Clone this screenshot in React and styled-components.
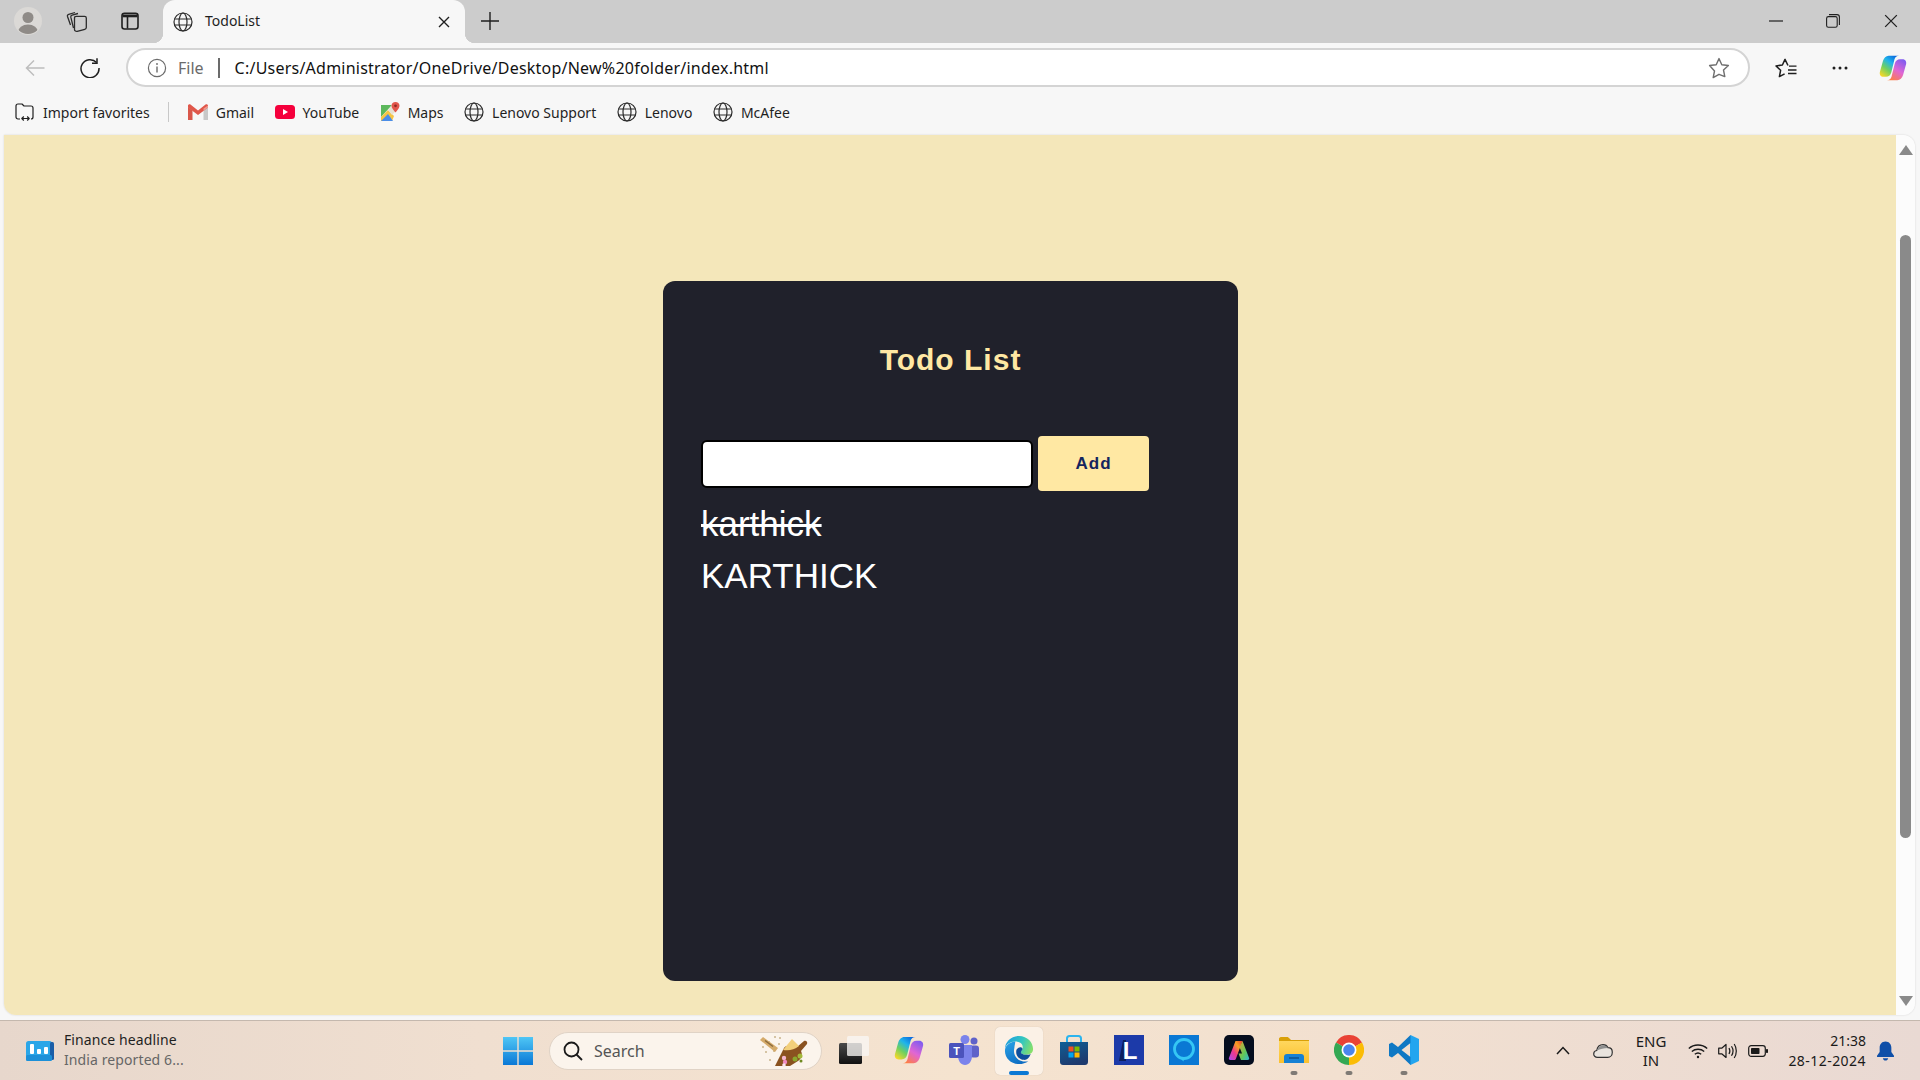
import React from "react";
import styled, { createGlobalStyle } from "styled-components";

const GlobalStyle = createGlobalStyle`
  * {
    box-sizing: border-box;
  }
  html,
  body {
    margin: 0;
    padding: 0;
    height: 100%;
    overflow: hidden;
  }
`;

const uiFont = `"Noto Sans", "Open Sans", sans-serif`;
const pageFont = `"Liberation Sans", Arial, sans-serif`;

/* ---------- icons ---------- */

const GlobeIcon = ({ size = 20 }) => (
  <svg width={size} height={size} viewBox="0 0 20 20" fill="none" stroke="#2b2b2b" strokeWidth="1.2">
    <circle cx="10" cy="10" r="9" />
    <ellipse cx="10" cy="10" rx="4" ry="9" />
    <path d="M1.6 7h16.8M1.6 13h16.8" />
  </svg>
);

const ProfileIcon = () => (
  <svg width="28" height="28" viewBox="0 0 28 28">
    <circle cx="14" cy="14" r="14" fill="#dbd9d6" />
    <clipPath id="profile-clip">
      <circle cx="14" cy="14" r="13" />
    </clipPath>
    <g clipPath="url(#profile-clip)" fill="#8f8b87">
      <circle cx="14" cy="10.5" r="5.5" />
      <ellipse cx="14" cy="25" rx="10" ry="7.5" />
    </g>
  </svg>
);

const WorkspacesIcon = () => (
  <svg width="22" height="24" viewBox="0 0 22 24" fill="none" stroke="#2b2b2b" strokeWidth="1.3" strokeLinejoin="round">
    <path d="M4.5 16 1.500 7.500c-.3-1 .2-1.800 1.200-2.100L9 3.500" />
    <path d="M7.500 19 4.800 8.200c-.2-1 .3-1.800 1.300-2.100L12 4.500" />
    <path d="M8.500 9c0-1 .6-1.700 1.600-1.700h8.500c1 0 1.700.7 1.700 1.700v9.500c0 1-.6 1.600-1.500 1.800l-7.600 2c-1.300.3-2.700-.4-2.700-1.700z" />
  </svg>
);

const TabActionsIcon = () => (
  <svg width="20" height="20" viewBox="0 0 20 20" fill="none" stroke="#1f1f1f" strokeWidth="1.6">
    <rect x="2" y="2.2" width="16" height="15.8" rx="2.5" />
    <path d="M2.5 3.500h15v2.800h-15z" fill="#1f1f1f" stroke="none" />
    <path d="M7.500 5v12.500" />
  </svg>
);

const CloseIcon = ({ size = 12, width = 1.4, color = "#1f1f1f" }) => (
  <svg width={size} height={size} viewBox="0 0 12 12" fill="none" stroke={color} strokeWidth={width}>
    <path d="M1 1l10 10M11 1 1 11" />
  </svg>
);

const PlusIcon = () => (
  <svg width="18" height="18" viewBox="0 0 18 18" fill="none" stroke="#1f1f1f" strokeWidth="1.4">
    <path d="M9 0v18M0 9h18" />
  </svg>
);

const MinimizeIcon = () => (
  <svg width="14" height="14" viewBox="0 0 14 14" fill="none" stroke="#1f1f1f" strokeWidth="1.2">
    <path d="M0 7h14" />
  </svg>
);

const RestoreIcon = () => (
  <svg width="14" height="14" viewBox="0 0 14 14" fill="none" stroke="#1f1f1f" strokeWidth="1.1">
    <rect x="0.6" y="2.6" width="10.6" height="10.6" rx="1.8" />
    <path d="M3 .6h8c1.300 0 2.400 1 2.400 2.400v8" />
  </svg>
);

const BackIcon = () => (
  <svg width="20" height="18" viewBox="0 0 20 18" fill="none" stroke="#bdbdbd" strokeWidth="1.5">
    <path d="M19.500 9H1.500M9 1.500 1.500 9 9 16.500" />
  </svg>
);

const RefreshIcon = () => (
  <svg width="20" height="20" viewBox="0 0 20 20" fill="none" stroke="#1f1f1f" strokeWidth="1.5">
    <path d="M16.600 4.500A9 9 0 1 0 19 10" />
    <path d="M17 .2v5h-5" />
  </svg>
);

const InfoIcon = () => (
  <svg width="20" height="20" viewBox="0 0 20 20" fill="none" stroke="#6b6b6b" strokeWidth="1.2">
    <circle cx="10" cy="10" r="8.600" />
    <path d="M10 8.600v6" strokeWidth="1.400" />
    <circle cx="10" cy="6" r="0.9" fill="#6b6b6b" stroke="none" />
  </svg>
);

const StarIcon = () => (
  <svg width="22" height="22" viewBox="0 0 22 22" fill="none" stroke="#6f6f6f" strokeWidth="1.4" strokeLinejoin="round">
    <path d="M11 1.600l2.800 6.100 6.600.8-4.900 4.500 1.300 6.600L11 17.300l-5.800 3.300 1.300-6.600L1.600 8.500l6.600-.8z" />
  </svg>
);

const FavoritesIcon = () => (
  <svg width="22" height="20" viewBox="0 0 22 20" fill="none" stroke="#1f1f1f" strokeWidth="1.5" strokeLinejoin="round">
    <path d="M13 7.500 10 1.400 7.400 7 1 7.900l4.600 4.400-1.200 6.300 5.200-2.800" />
    <path d="M14 8.200h7.500M13 12h8.500M13 15.500h8.500" strokeWidth="1.3" />
  </svg>
);

const DotsIcon = () => (
  <svg width="16" height="4" viewBox="0 0 16 4" fill="#1f1f1f">
    <circle cx="2" cy="2" r="1.500" />
    <circle cx="8" cy="2" r="1.500" />
    <circle cx="14" cy="2" r="1.500" />
  </svg>
);

const CopilotIcon = ({ id, size = 28 }) => (
  <svg width={size} height={size} viewBox="0 0 32 32">
    <defs>
      <linearGradient id={`${id}-a`} x1="0.85" y1="0" x2="0.15" y2="1">
        <stop offset="0" stopColor="#0a62dc" />
        <stop offset="0.35" stopColor="#1fb4ec" />
        <stop offset="0.65" stopColor="#6fd060" />
        <stop offset="1" stopColor="#f8d828" />
      </linearGradient>
      <linearGradient id={`${id}-b`} x1="0.8" y1="0" x2="0.2" y2="1">
        <stop offset="0" stopColor="#7f5cf0" />
        <stop offset="0.5" stopColor="#e066d4" />
        <stop offset="1" stopColor="#ff7f3f" />
      </linearGradient>
    </defs>
    <path d="M11 2h12c-3 0-4.500 1.500-5.300 4L14 21c-.8 3-3 5-6 5H5C2 26 .3 23.500 1 20.500L4.500 8C5.500 4.500 8 2 11 2z" fill={`url(#${id}-a)`} />
    <path d="M21 30H9c3 0 4.500-1.500 5.300-4L18 11c.8-3 3-5 6-5h3c3 0 4.700 2.500 4 5.500L27.500 24c-1 3.500-3.500 6-6.500 6z" fill={`url(#${id}-b)`} />
  </svg>
);

const ImportIcon = () => (
  <svg width="20" height="20" viewBox="0 0 20 20" fill="none" stroke="#1f1f1f" strokeWidth="1.2" strokeLinejoin="round">
    <path d="M5 17H3c-1.200 0-2-.8-2-2V4c0-1.200.8-2 2-2h4l2 2h7c1.200 0 2 .8 2 2v9c0 1.200-.8 2-2 2" />
    <path d="M7 16.500h7M8.800 14.500l-2 2 2 2M12.200 14.500l2 2-2 2" />
  </svg>
);

const GmailIcon = () => (
  <svg width="20" height="16" viewBox="0 0 20 16">
    <path d="M0 3v13h4.500V6.500z" fill="#d9574a" />
    <path d="M20 3v13h-4.500V6.500z" fill="#c8c8c8" />
    <path d="M0 1.500C0 .500 1.500-.300 2.500.500L10 6.500 17.500.500c1-.8 2.500 0 2.500 1V3.500L10 11 0 3.500z" fill="#e0574a" />
    <path d="M15.500 4.400 20 1.500v2L15.500 6.800z" fill="#ef9a90" />
  </svg>
);

const YouTubeIcon = () => (
  <svg width="20" height="14" viewBox="0 0 20 14">
    <rect width="20" height="14" rx="3.500" fill="#f5003c" />
    <path d="M8 4l5 3-5 3z" fill="#fff" />
  </svg>
);

const MapsIcon = () => (
  <svg width="20" height="20" viewBox="0 0 20 20">
    <path d="M1 3h11L1 15z" fill="#5cb85c" />
    <path d="M1 15 8 8l6 6-2 5H1z" fill="#f6c544" />
    <path d="M1 19 8 12l5 7z" fill="#4a8de8" />
    <path d="M12 3h3v7l-3 3-4-5z" fill="#e7e3d4" />
    <path d="M15.500 0c-2.300 0-4 1.700-4 3.800 0 2.700 4 6.700 4 6.700s4-4 4-6.700c0-2.100-1.700-3.800-4-3.800z" fill="#e2574c" />
    <circle cx="15.500" cy="3.800" r="1.400" fill="#8f2a24" />
  </svg>
);

const WidgetIcon = () => (
  <svg width="28" height="20" viewBox="0 0 28 20">
    <rect width="26" height="20" rx="2.500" fill="#2aa6e8" />
    <rect x="24" y="1" width="4" height="18" rx="1.500" fill="#1a5ea8" />
    <rect y="14" width="26" height="6" rx="1.500" fill="#1c90d8" />
    <rect x="4" y="3" width="4" height="10" rx="1" fill="#fff" />
    <rect x="11" y="8" width="4" height="5" rx="1" fill="#fff" />
    <rect x="18" y="6" width="4" height="7" rx="1" fill="#fff" />
  </svg>
);

const WindowsIcon = () => (
  <svg width="30" height="30" viewBox="0 0 30 30">
    <defs>
      <linearGradient id="win-a" x1="0" y1="0" x2="0" y2="1">
        <stop offset="0" stopColor="#4fc6f5" />
        <stop offset="1" stopColor="#0a78d6" />
      </linearGradient>
    </defs>
    <path d="M0 1h14.300v13.300H0zM15.700 1H30v13.300H15.700zM0 15.700h14.300V29H0zM15.700 15.700H30V29H15.700z" fill="url(#win-a)" />
  </svg>
);

const SearchGlassIcon = () => (
  <svg width="20" height="20" viewBox="0 0 20 20" fill="none" stroke="#1a1a1a" strokeWidth="1.800">
    <circle cx="8.500" cy="8.500" r="7" />
    <path d="M13.500 13.500 19 19" />
  </svg>
);

const SearchArtIcon = () => (
  <svg width="60" height="32" viewBox="0 0 60 32">
    <g fill="#c9b58c">
      <circle cx="10" cy="7" r="1" />
      <circle cx="16" cy="2" r="1" />
      <circle cx="21" cy="3" r="1" />
      <circle cx="20" cy="9" r="1" />
      <circle cx="4" cy="12" r="1" />
      <circle cx="7" cy="17" r="1" />
      <circle cx="15" cy="16" r="1" />
      <circle cx="11" cy="25" r="1" />
    </g>
    <path d="M1 5l3-3 15 11-3 4z" fill="#d4aa6a" />
    <path d="M6 5.500l8 6" stroke="#8a6a3c" strokeWidth="1.500" />
    <path d="M16 31l9-18c2-3 9-3 13-1l7-6c2-1 4 1 3 3l-6 7c2 4 0 8-3 10l-8 5z" fill="#8a5220" />
    <path d="M24 15 33 4l7 7c-5 4-10 5-16 4z" fill="#f2cf7a" />
    <circle cx="25" cy="23" r="2.200" fill="#f4b6d2" />
    <circle cx="26" cy="27" r="2.200" fill="#f08ac0" />
    <circle cx="25" cy="30" r="1.800" fill="#fbe4ef" />
    <circle cx="36" cy="24" r="2.500" fill="#8aa82e" />
    <circle cx="41" cy="21" r="2.500" fill="#a3b83a" />
    <circle cx="42" cy="26" r="1.500" fill="#6f8a22" />
  </svg>
);

const TaskViewIcon = () => (
  <svg width="30" height="28" viewBox="0 0 30 28">
    <defs>
      <linearGradient id="tv-a" x1="0" y1="0" x2="0" y2="1">
        <stop offset="0" stopColor="#4a4a4a" />
        <stop offset="1" stopColor="#111" />
      </linearGradient>
    </defs>
    <rect x="0" y="7" width="23" height="21" rx="1.500" fill="url(#tv-a)" />
    <rect x="8" y="0" width="22" height="20" rx="1.500" fill="#f8f6f3" fillOpacity="0.78" />
  </svg>
);

const TeamsIcon = () => (
  <svg width="30" height="30" viewBox="0 0 30 30">
    <circle cx="25" cy="6" r="3.500" fill="#5f62c9" />
    <rect x="21" y="10.500" width="9" height="12" rx="3" fill="#5f62c9" />
    <circle cx="16" cy="4.500" r="4.500" fill="#7b83eb" />
    <path d="M9 10h14v11c0 5-3 9-7 9s-7-4-7-9z" fill="#7b83eb" />
    <rect x="0" y="8" width="15" height="15" rx="1.500" fill="#4b53bc" />
    <text x="7.500" y="19.500" textAnchor="middle" fontFamily={pageFont} fontSize="11" fontWeight="700" fill="#fff">T</text>
  </svg>
);

const EdgeIcon = () => (
  <svg width="30" height="30" viewBox="0 0 32 32">
    <defs>
      <linearGradient id="edge-a" x1="0" y1="0.3" x2="1" y2="0.6">
        <stop offset="0" stopColor="#1f9ee0" />
        <stop offset="0.55" stopColor="#33c6c0" />
        <stop offset="1" stopColor="#86e06a" />
      </linearGradient>
      <linearGradient id="edge-b" x1="0" y1="0" x2="0.5" y2="1">
        <stop offset="0" stopColor="#2aa3e6" />
        <stop offset="1" stopColor="#0f6fc4" />
      </linearGradient>
    </defs>
    <path d="M1 15C1 7 8 1 16 1c9 0 15 7 15 14 0 4-3 6-7 6-3 0-6-1-6-3 0-1 2-2 2-5 0-4-4-6-8-6C7 7 2 10 1 15z" fill="url(#edge-a)" />
    <path d="M12 7C6 7.500 1 11.500 1 17c0 8 7 14 15 14 4 0 7-1 10-3-4 1-9 0-12-3-3-3-4-7-3-11 .3-3 1-5 1-7z" fill="url(#edge-b)" />
    <path d="M18 18c0 2 3 3 6 3 1 0 3 0 4.500-.8C26.500 25 24 27 21 26.500c-4.500-.5-8-4-8-8.500 0-3 2-5.500 5-5 2 .3 2.300 2.300 1 3.500-.7.700-1 1.200-1 2z" fill="#0f4f9c" />
  </svg>
);

const StoreIcon = () => (
  <svg width="30" height="30" viewBox="0 0 30 30">
    <defs>
      <linearGradient id="store-a" x1="0" y1="0" x2="0.4" y2="1">
        <stop offset="0" stopColor="#0f5f96" />
        <stop offset="1" stopColor="#1e3a6e" />
      </linearGradient>
    </defs>
    <path d="M8 7V3.500C8 2 9 1 10.500 1h9C21 1 22 2 22 3.500V7" fill="none" stroke="#2cb4ee" strokeWidth="2" />
    <path d="M1 7h28v20c0 1.700-1.300 3-3 3H4c-1.700 0-3-1.300-3-3z" fill="url(#store-a)" />
    <rect x="9.500" y="11.500" width="5" height="5" fill="#f25022" />
    <rect x="15.500" y="11.500" width="5" height="5" fill="#7fba00" />
    <rect x="9.500" y="17.500" width="5" height="5" fill="#00a4ef" />
    <rect x="15.500" y="17.500" width="5" height="5" fill="#ffb900" />
  </svg>
);

const LenovoIcon = () => (
  <svg width="30" height="30" viewBox="0 0 30 30">
    <rect width="30" height="30" fill="#1c3aa9" />
    <path d="M9 5h3v21H5z" fill="#0c1f5e" />
    <text x="16" y="24" textAnchor="middle" fontFamily={pageFont} fontSize="24" fontWeight="700" fill="#fff">L</text>
  </svg>
);

const AlexaIcon = () => (
  <svg width="30" height="30" viewBox="0 0 30 30">
    <rect width="30" height="30" fill="#0a78d4" />
    <circle cx="15" cy="14" r="9.500" fill="none" stroke="#35c6f4" strokeWidth="2.800" />
    <path d="M11 23l3.500 3.500.5-3z" fill="#35c6f4" />
  </svg>
);

const AdobeIcon = () => (
  <svg width="30" height="30" viewBox="0 0 30 30">
    <defs>
      <linearGradient id="adobe-a" x1="0" y1="1" x2="1" y2="0">
        <stop offset="0" stopColor="#a64cf5" />
        <stop offset="0.4" stopColor="#f0388a" />
        <stop offset="0.7" stopColor="#f8a020" />
        <stop offset="1" stopColor="#e83a3a" />
      </linearGradient>
      <linearGradient id="adobe-b" x1="0" y1="0" x2="1" y2="1">
        <stop offset="0" stopColor="#f0a030" />
        <stop offset="0.6" stopColor="#5fc95a" />
        <stop offset="1" stopColor="#2fb4d8" />
      </linearGradient>
    </defs>
    <rect width="30" height="30" rx="5" fill="#050d1e" />
    <path d="M11.500 6h7l-3 8-3.500 9.500c-.3 1-1 1.500-2 1.500H6.500C5 25 4.500 24 5 22.800z" fill="url(#adobe-a)" />
    <path d="M18.500 6 25 22.800c.5 1.200 0 2.200-1.500 2.200H17l-2.500-6.500h3.500L15.500 12z" fill="url(#adobe-b)" />
  </svg>
);

const FolderIcon = () => (
  <svg width="30" height="30" viewBox="0 0 30 30">
    <defs>
      <linearGradient id="folder-a" x1="0" y1="0" x2="0" y2="1">
        <stop offset="0" stopColor="#ffd75e" />
        <stop offset="1" stopColor="#fbc02d" />
      </linearGradient>
    </defs>
    <path d="M0 4c0-1 .7-2 2-2h6c1 0 1.500.5 2 1l2 2h18v3H0z" fill="#d9a008" />
    <path d="M0 6h30v22H0z" fill="url(#folder-a)" />
    <path d="M5 28v-6c0-2 1-3 3-3h14c2 0 3 1 3 3v6z" fill="#1681d4" />
    <path d="M10 23h10" stroke="#0b4f8c" strokeWidth="1.400" />
  </svg>
);

const ChromeIcon = () => (
  <svg width="30" height="30" viewBox="0 0 30 30">
    <path d="M15 15 2 7.500A15 15 0 0 1 28 7.500z" fill="#e94235" />
    <path d="M15 15 28 7.500A15 15 0 0 1 15 30z" fill="#fbbc05" />
    <path d="M15 15 15 30A15 15 0 0 1 2 7.500z" fill="#34a853" />
    <circle cx="15" cy="15" r="7.500" fill="#fff" />
    <circle cx="15" cy="15" r="5.800" fill="#4a85ed" />
  </svg>
);

const VsCodeIcon = () => (
  <svg width="30" height="30" viewBox="0 0 30 30">
    <path d="M21.500 0 30 4v22l-8.500 4-.5-.5V.5z" fill="#23a5ef" />
    <path d="M21.500 0 9 12 3 7.500 0 9v12l3 1.500L9 18l12.500 12V22l-9-7 9-7z" fill="#0f78c4" />
  </svg>
);

const ChevronUpIcon = () => (
  <svg width="14" height="9" viewBox="0 0 14 9" fill="none" stroke="#1a1a1a" strokeWidth="1.500">
    <path d="M1 8l6-6.500L13 8" />
  </svg>
);

const CloudIcon = () => (
  <svg width="20" height="14" viewBox="0 0 20 14">
    <path d="M4.500 13.300C2 13.300.7 11.600.7 9.900c0-1.900 1.400-3.200 3-3.400C4.400 3 7 .7 10 .7c2.300 0 4.200 1.300 5 3 2.500 0 4.300 1.800 4.300 4.500 0 3-2 5.100-4.600 5.100z" fill="#e9e4de" stroke="#333" strokeWidth="1.200" />
    <path d="M4 6.500C5 3.500 7.500 1.200 10 1.200c2.200 0 4 1.200 4.800 2.800C11 4 7 5 4 6.500z" fill="#8f8f8f" />
  </svg>
);

const WifiIcon = () => (
  <svg width="20" height="16" viewBox="0 0 20 16" fill="none" stroke="#1a1a1a" strokeWidth="1.300">
    <path d="M.8 5.500C5.800.8 14.200.8 19.200 5.500M3.800 8.500c3.500-3 9-3 12.400 0M6.800 11.300c1.800-1.500 4.600-1.500 6.400 0" />
    <circle cx="10" cy="14" r="1.200" fill="#1a1a1a" stroke="none" />
  </svg>
);

const VolumeIcon = () => (
  <svg width="20" height="16" viewBox="0 0 20 16" fill="none" stroke="#1a1a1a" strokeWidth="1.200" strokeLinejoin="round">
    <path d="M.7 5.200h3L8 1.500v13L3.700 10.800h-3z" />
    <path d="M11 5c1 1.700 1 4.300 0 6M13.500 3.200c1.800 2.800 1.800 6.800 0 9.600M16.200 1c2.800 4 2.800 10 0 14" />
  </svg>
);

const BatteryIcon = () => (
  <svg width="20" height="12" viewBox="0 0 20 12" fill="none">
    <rect x="0.700" y="0.700" width="16.600" height="10.600" rx="2.500" stroke="#1a1a1a" strokeWidth="1.200" />
    <rect x="3" y="3" width="8.500" height="6" rx="0.800" fill="#1a1a1a" />
    <rect x="18" y="4" width="2" height="4" rx="0.800" fill="#1a1a1a" />
  </svg>
);

const BellIcon = () => (
  <svg width="17" height="20" viewBox="0 0 16 18" fill="#0f4fa8">
    <path d="M8 0C4.500 0 2.500 2.800 2.500 6v4L0 13.500c-.3.600 0 1.200.7 1.200h14.600c.7 0 1-.6.7-1.200L13.500 10V6C13.500 2.800 11.500 0 8 0z" />
    <path d="M5.500 15.800h5c-.3 1.300-1.300 2.200-2.500 2.200s-2.200-.9-2.500-2.200z" />
  </svg>
);

/* ---------- browser chrome ---------- */

const Desktop = styled.div`
  width: 1920px;
  height: 1080px;
  display: flex;
  flex-direction: column;
  background: #f7f7f7;
  font-family: ${uiFont};
  overflow: hidden;
`;

const TabStrip = styled.div`
  height: 43px;
  flex: none;
  display: flex;
  align-items: center;
  background: #cccccc;
`;

const StripButton = styled.div`
  width: ${(p) => p.$w}px;
  height: 43px;
  flex: none;
  display: flex;
  align-items: center;
  justify-content: center;
  padding-bottom: 2px;
`;

const Tab = styled.div`
  position: relative;
  width: 302px;
  height: 43px;
  flex: none;
  margin-left: 2px;
  display: flex;
  align-items: center;
  padding: 0 15px 0 10px;
  background: #f7f7f7;
  border-radius: 12px 12px 0 0;
  &::before,
  &::after {
    content: "";
    position: absolute;
    bottom: 0;
    width: 10px;
    height: 10px;
  }
  &::before {
    left: -10px;
    background: radial-gradient(circle at 0 0, #cccccc 10px, #f7f7f7 10.5px);
  }
  &::after {
    right: -10px;
    background: radial-gradient(circle at 100% 0, #cccccc 10px, #f7f7f7 10.5px);
  }
`;

const TabTitle = styled.span`
  flex: 1;
  margin: 0 0 2px 12px;
  font-size: 14px;
  color: #1f1f1f;
`;

const WindowControls = styled.div`
  margin-left: auto;
  display: flex;
  align-items: center;
`;

const Toolbar = styled.div`
  height: 50px;
  flex: none;
  display: flex;
  align-items: center;
  padding: 5px 0 6px;
`;

const ToolButton = styled.div`
  width: ${(p) => p.$w}px;
  flex: none;
  display: flex;
  align-items: center;
  justify-content: center;
`;

const AddressBar = styled.div`
  width: 1624px;
  height: 39px;
  flex: none;
  margin-left: 16px;
  display: flex;
  align-items: center;
  padding: 0 18px 0 19px;
  background: #ffffff;
  border: 2px solid #d4d4d4;
  border-radius: 20px;
`;

const SecurityLabel = styled.span`
  margin-left: 11px;
  font-size: 16px;
  color: #6b6b6b;
`;

const AddressDivider = styled.span`
  width: 2px;
  height: 20px;
  margin: 0 15px 0 14px;
  background: #6b6b6b;
`;

const Url = styled.span`
  flex: 1;
  font-size: 16px;
  letter-spacing: 0.23px;
  color: #111111;
  white-space: nowrap;
`;

const BookmarksBar = styled.div`
  height: 42px;
  flex: none;
  display: flex;
  align-items: center;
  gap: 20.5px;
  padding: 0 0 4px 15px;
`;

const Bookmark = styled.div`
  display: flex;
  align-items: center;
  gap: 8px;
  font-size: 14px;
  color: #1f1f1f;
  white-space: nowrap;
`;

const BookmarkDivider = styled.span`
  width: 1px;
  height: 20px;
  background: #c8c8c8;
  margin: 0 -2px;
`;

const Viewport = styled.div`
  height: 880px;
  flex: none;
  margin: 0 5px 0 4px;
  display: flex;
  border-radius: 0 12px 12px 12px;
  overflow: hidden;
  box-shadow: 0 0 2px rgba(0, 0, 0, 0.16);
`;

const Scrollbar = styled.div`
  width: 19px;
  flex: none;
  display: flex;
  flex-direction: column;
  align-items: center;
  padding: 10px 0 9px;
  background: #fcfcfc;
`;

const ArrowUp = styled.div`
  width: 0;
  height: 0;
  border-left: 7px solid transparent;
  border-right: 7px solid transparent;
  border-bottom: 10px solid #8a8a8a;
`;

const ArrowDown = styled(ArrowUp)`
  border-bottom: 0;
  border-top: 10px solid #8a8a8a;
`;

const Thumb = styled.div`
  width: 11px;
  height: 603px;
  margin: 80px 0 auto;
  background: #8a8a8a;
  border-radius: 6px;
`;

/* ---------- todo page ---------- */

const Page = styled.main`
  flex: 1;
  display: flex;
  justify-content: center;
  align-items: flex-start;
  padding-top: 146px;
  background: #f4e7ba;
  font-family: ${pageFont};
`;

const Card = styled.section`
  width: 575px;
  height: 700px;
  flex: none;
  margin-left: 1px;
  padding: 62px 38px 0;
  background: #20212b;
  border-radius: 12px;
`;

const Heading = styled.h1`
  margin: 0 0 59px;
  font-size: 30px;
  line-height: 34px;
  font-weight: 700;
  letter-spacing: 1px;
  text-align: center;
  color: #ffe8a3;
`;

const Form = styled.form`
  display: flex;
  align-items: center;
  gap: 5px;
`;

const TextInput = styled.input`
  width: 332px;
  height: 48px;
  padding: 0 10px;
  background: #ffffff;
  border: 2px solid #000000;
  border-radius: 6px;
  outline: none;
`;

const AddButton = styled.button`
  width: 111px;
  height: 55px;
  padding: 0;
  background: #ffe8a3;
  border: none;
  border-radius: 4px;
  font-family: ${pageFont};
  font-size: 17px;
  font-weight: 700;
  letter-spacing: 1px;
  color: #14245f;
`;

const TodoList = styled.ul`
  margin: 13px 0 0;
  padding: 0;
  list-style: none;
`;

const TodoItem = styled.li`
  margin-bottom: 12px;
  font-size: 35px;
  line-height: 40px;
  color: #ffffff;
  text-decoration: ${(p) => (p.$done ? "line-through" : "none")};
`;

/* ---------- taskbar ---------- */

const Taskbar = styled.footer`
  height: 60px;
  flex: none;
  margin-top: 5px;
  display: flex;
  align-items: center;
  background: linear-gradient(90deg, #e7d7cc 0%, #f0dfd0 25%, #f5e3cf 50%, #f2e0d0 70%, #e9d9d3 100%);
  border-top: 1px solid #c4b8ae;
`;

const NewsWidget = styled.div`
  width: 503px;
  flex: none;
  display: flex;
  align-items: center;
  gap: 10px;
  padding-left: 26px;
`;

const NewsText = styled.div`
  display: flex;
  flex-direction: column;
  padding-bottom: 2px;
  font-size: 14px;
  line-height: 20px;
  letter-spacing: 0.1px;
  color: #1f1f1f;
`;

const NewsSub = styled.span`
  color: #666666;
`;

const StartButton = styled.div`
  width: 30px;
  flex: none;
  display: flex;
  margin-right: 16px;
`;

const SearchBox = styled.div`
  width: 273px;
  height: 38px;
  flex: none;
  display: flex;
  align-items: center;
  padding: 0 2px 0 13px;
  background: #fbf4ec;
  border: 1px solid #e0d3c6;
  border-radius: 19px;
`;

const SearchLabel = styled.span`
  flex: 1;
  margin-left: 11px;
  font-size: 16px;
  color: #555555;
`;

const Apps = styled.div`
  display: flex;
  margin-left: 4px;
`;

const AppSlot = styled.div`
  position: relative;
  width: ${(p) => (p.$active ? 48 : 55)}px;
  height: 48px;
  margin: 0 ${(p) => (p.$active ? 3.5 : 0)}px;
  display: flex;
  align-items: center;
  justify-content: center;
  padding-bottom: 1px;
  background: ${(p) => (p.$active ? "#fbf1e6" : "transparent")};
  border-radius: 5px;
  box-shadow: ${(p) => (p.$active ? "0 0 1px rgba(0,0,0,0.2)" : "none")};
`;

const RunningDot = styled.span`
  position: absolute;
  bottom: 0;
  left: 50%;
  transform: translateX(-50%);
  width: ${(p) => (p.$active ? 20 : 7)}px;
  height: 4px;
  border-radius: 2px;
  background: ${(p) => (p.$active ? "#0a78d4" : "#7f7a75")};
`;

const Tray = styled.div`
  margin-left: auto;
  display: flex;
  align-items: center;
  padding-right: 16px;
  color: #1a1a1a;
`;

const TrayIcon = styled.div`
  width: ${(p) => p.$w}px;
  flex: none;
  display: flex;
  justify-content: center;
`;

const Lang = styled.div`
  width: 48px;
  flex: none;
  margin: 0 8px 0 4px;
  font-size: 15px;
  line-height: 19px;
  text-align: center;
`;

const Clock = styled.div`
  width: 93px;
  flex: none;
  display: flex;
  flex-direction: column;
  align-items: flex-end;
  font-size: 14px;
  line-height: 20px;
`;

const ClockDate = styled.span`
  letter-spacing: 0.45px;
  white-space: nowrap;
`;

const bookmarks = [
  { label: "Gmail", icon: <GmailIcon /> },
  { label: "YouTube", icon: <YouTubeIcon /> },
  { label: "Maps", icon: <MapsIcon /> },
  { label: "Lenovo Support", icon: <GlobeIcon /> },
  { label: "Lenovo", icon: <GlobeIcon /> },
  { label: "McAfee", icon: <GlobeIcon /> },
];

const apps = [
  { id: "taskview", icon: <TaskViewIcon /> },
  { id: "copilot", icon: <CopilotIcon id="copilot-task" size={30} /> },
  { id: "teams", icon: <TeamsIcon /> },
  { id: "edge", icon: <EdgeIcon />, active: true },
  { id: "store", icon: <StoreIcon /> },
  { id: "lenovo", icon: <LenovoIcon /> },
  { id: "alexa", icon: <AlexaIcon /> },
  { id: "adobe", icon: <AdobeIcon /> },
  { id: "folder", icon: <FolderIcon />, running: true },
  { id: "chrome", icon: <ChromeIcon />, running: true },
  { id: "vscode", icon: <VsCodeIcon />, running: true },
];

const todos = [
  { text: "karthick", done: true },
  { text: "KARTHICK", done: false },
];

export default function App() {
  return (
    <Desktop>
      <GlobalStyle />
      <TabStrip>
        <StripButton $w={56}>
          <ProfileIcon />
        </StripButton>
        <StripButton $w={42}>
          <WorkspacesIcon />
        </StripButton>
        <StripButton $w={63}>
          <TabActionsIcon />
        </StripButton>
        <Tab>
          <GlobeIcon />
          <TabTitle>TodoList</TabTitle>
          <CloseIcon />
        </Tab>
        <StripButton $w={50}>
          <PlusIcon />
        </StripButton>
        <WindowControls>
          <StripButton $w={56}>
            <MinimizeIcon />
          </StripButton>
          <StripButton $w={58}>
            <RestoreIcon />
          </StripButton>
          <StripButton $w={58}>
            <CloseIcon size={14} width={1.1} />
          </StripButton>
        </WindowControls>
      </TabStrip>

      <Toolbar>
        <ToolButton $w={70}>
          <BackIcon />
        </ToolButton>
        <ToolButton $w={40}>
          <RefreshIcon />
        </ToolButton>
        <AddressBar>
          <InfoIcon />
          <SecurityLabel>File</SecurityLabel>
          <AddressDivider />
          <Url>C:/Users/Administrator/OneDrive/Desktop/New%20folder/index.html</Url>
          <StarIcon />
        </AddressBar>
        <ToolButton $w={71}>
          <FavoritesIcon />
        </ToolButton>
        <ToolButton $w={38}>
          <DotsIcon />
        </ToolButton>
        <ToolButton $w={68}>
          <CopilotIcon id="copilot-bar" />
        </ToolButton>
      </Toolbar>

      <BookmarksBar>
        <Bookmark>
          <ImportIcon />
          Import favorites
        </Bookmark>
        <BookmarkDivider />
        {bookmarks.map((b) => (
          <Bookmark key={b.label}>
            {b.icon}
            {b.label}
          </Bookmark>
        ))}
      </BookmarksBar>

      <Viewport>
        <Page>
          <Card>
            <Heading>Todo List</Heading>
            <Form>
              <TextInput />
              <AddButton type="button">Add</AddButton>
            </Form>
            <TodoList>
              {todos.map((t) => (
                <TodoItem key={t.text} $done={t.done}>
                  {t.text}
                </TodoItem>
              ))}
            </TodoList>
          </Card>
        </Page>
        <Scrollbar>
          <ArrowUp />
          <Thumb />
          <ArrowDown />
        </Scrollbar>
      </Viewport>

      <Taskbar>
        <NewsWidget>
          <WidgetIcon />
          <NewsText>
            Finance headline
            <NewsSub>India reported 6...</NewsSub>
          </NewsText>
        </NewsWidget>
        <StartButton>
          <WindowsIcon />
        </StartButton>
        <SearchBox>
          <SearchGlassIcon />
          <SearchLabel>Search</SearchLabel>
          <SearchArtIcon />
        </SearchBox>
        <Apps>
          {apps.map((a) => (
            <AppSlot key={a.id} $active={a.active}>
              {a.icon}
              {(a.active || a.running) && <RunningDot $active={a.active} />}
            </AppSlot>
          ))}
        </Apps>
        <Tray>
          <TrayIcon $w={40}>
            <ChevronUpIcon />
          </TrayIcon>
          <TrayIcon $w={40}>
            <CloudIcon />
          </TrayIcon>
          <Lang>
            ENG
            <br />
            IN
          </Lang>
          <TrayIcon $w={30}>
            <WifiIcon />
          </TrayIcon>
          <TrayIcon $w={30}>
            <VolumeIcon />
          </TrayIcon>
          <TrayIcon $w={30}>
            <BatteryIcon />
          </TrayIcon>
          <Clock>
            <span>21:38</span>
            <ClockDate>28-12-2024</ClockDate>
          </Clock>
          <TrayIcon $w={38}>
            <BellIcon />
          </TrayIcon>
        </Tray>
      </Taskbar>
    </Desktop>
  );
}
